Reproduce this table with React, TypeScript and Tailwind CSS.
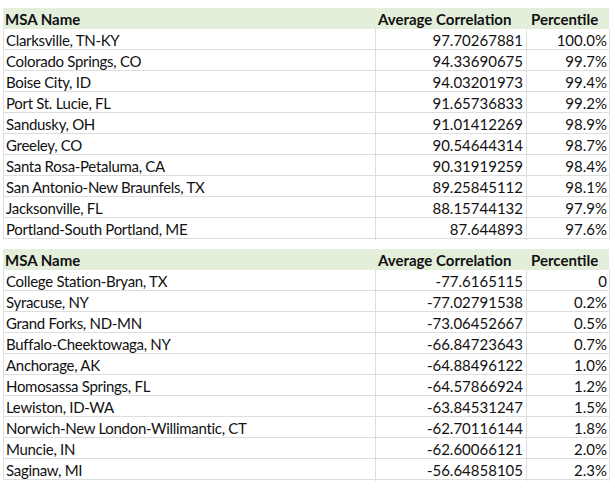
import React from "react";

interface Row {
  name: string;
  corr: string;
  pct: string;
}

const top: Row[] = [
  { name: "Clarksville, TN-KY", corr: "97.70267881", pct: "100.0%" },
  { name: "Colorado Springs, CO", corr: "94.33690675", pct: "99.7%" },
  { name: "Boise City, ID", corr: "94.03201973", pct: "99.4%" },
  { name: "Port St. Lucie, FL", corr: "91.65736833", pct: "99.2%" },
  { name: "Sandusky, OH", corr: "91.01412269", pct: "98.9%" },
  { name: "Greeley, CO", corr: "90.54644314", pct: "98.7%" },
  { name: "Santa Rosa-Petaluma, CA", corr: "90.31919259", pct: "98.4%" },
  { name: "San Antonio-New Braunfels, TX", corr: "89.25845112", pct: "98.1%" },
  { name: "Jacksonville, FL", corr: "88.15744132", pct: "97.9%" },
  { name: "Portland-South Portland, ME", corr: "87.644893", pct: "97.6%" },
];

const bottom: Row[] = [
  { name: "College Station-Bryan, TX", corr: "-77.6165115", pct: "0" },
  { name: "Syracuse, NY", corr: "-77.02791538", pct: "0.2%" },
  { name: "Grand Forks, ND-MN", corr: "-73.06452667", pct: "0.5%" },
  { name: "Buffalo-Cheektowaga, NY", corr: "-66.84723643", pct: "0.7%" },
  { name: "Anchorage, AK", corr: "-64.88496122", pct: "1.0%" },
  { name: "Homosassa Springs, FL", corr: "-64.57866924", pct: "1.2%" },
  { name: "Lewiston, ID-WA", corr: "-63.84531247", pct: "1.5%" },
  { name: "Norwich-New London-Willimantic, CT", corr: "-62.70116144", pct: "1.8%" },
  { name: "Muncie, IN", corr: "-62.60066121", pct: "2.0%" },
  { name: "Saginaw, MI", corr: "-56.64858105", pct: "2.3%" },
];

const Table: React.FC<{ rows: Row[] }> = ({ rows }) => (
  <div className="w-[606px] text-[15px] leading-[22px] text-[#111] whitespace-nowrap">
    {/* header band, no cell borders */}
    <div className="grid grid-cols-[372px_151px_83px] h-[21px] bg-[#e3eedb] font-bold">
      <div className="pl-[2px]">MSA Name</div>
      <div className="pl-[3px]">Average Correlation</div>
      <div className="pl-[5px]">Percentile</div>
    </div>
    {rows.map((r) => (
      <div
        key={r.name}
        className="grid grid-cols-[372px_151px_83px] h-[21px] border-b border-[#dedede] border-l"
      >
        <div className="pl-[2px] tracking-[-0.3px] border-r border-[#dedede]">{r.name}</div>
        <div className="pr-[3px] text-right border-r border-[#dedede]">{r.corr}</div>
        <div className="pr-[2px] text-right border-r border-[#dedede]">{r.pct}</div>
      </div>
    ))}
  </div>
);

export default function App() {
  return (
    <div className="w-[615px] h-[489px] bg-white pl-[3px] pt-[8px] flex flex-col gap-[10px] font-['Lato',sans-serif]">
      <Table rows={top} />
      <Table rows={bottom} />
    </div>
  );
}
